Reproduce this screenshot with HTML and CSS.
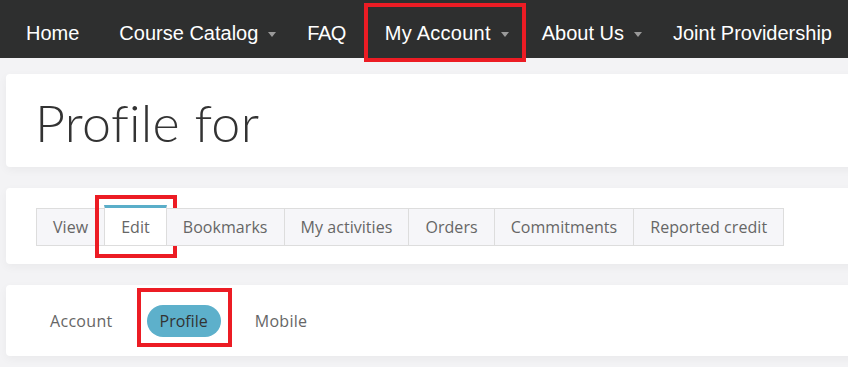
FILE: index.html
```html
<!DOCTYPE html>
<html lang="en">
<head>
<meta charset="utf-8">
<title>Profile</title>
<link rel="stylesheet" href="styles.css">
</head>
<body>
<nav class="topnav">
  <a class="nav-item">Home</a>
  <a class="nav-item dropdown">Course Catalog<span class="caret"></span></a>
  <a class="nav-item faq">FAQ</a>
  <a class="nav-item dropdown marked">My Account<span class="caret"></span><span class="annot annot-nav"></span></a>
  <a class="nav-item dropdown">About Us<span class="caret"></span></a>
  <a class="nav-item">Joint Providership</a>
</nav>
<main class="content">
  <section class="card card-title">
    <h1 class="page-title">Profile for</h1>
  </section>
  <section class="card card-tabs">
    <ul class="tabs">
      <li class="tab">View</li>
      <li class="tab active">Edit<span class="annot annot-tab"></span></li>
      <li class="tab">Bookmarks</li>
      <li class="tab">My activities</li>
      <li class="tab">Orders</li>
      <li class="tab">Commitments</li>
      <li class="tab">Reported credit</li>
    </ul>
  </section>
  <section class="card card-pills">
    <ul class="pills">
      <li class="pill">Account</li>
      <li class="pill active">Profile<span class="annot annot-pill"></span></li>
      <li class="pill">Mobile</li>
    </ul>
  </section>
</main>
</body>
</html>
```
FILE: styles.css
```css
html, body {
  margin: 0;
  padding: 0;
  overflow: hidden;
}
body {
  background: #f3f3f5;
  font-family: "Open Sans", "Liberation Sans", sans-serif;
}
.topnav {
  display: flex;
  height: 58px;
  background: #2e2f2f;
  padding-left: 6px;
}
.nav-item {
  position: relative;
  display: flex;
  align-items: flex-start;
  box-sizing: border-box;
  height: 58px;
  padding: 22px 20px 0;
  line-height: 23px;
  font-family: "Liberation Sans", Arial, sans-serif;
  font-size: 20px;
  color: #ffffff;
  white-space: nowrap;
}
.nav-item.faq {
  letter-spacing: -0.5px;
  padding-right: 19px;
}
.nav-item.dropdown {
  padding-right: 11px;
}
.nav-item.marked {
  letter-spacing: 0.25px;
  padding-right: 13px;
}
.caret {
  display: inline-block;
  width: 0;
  height: 0;
  margin: 10px 0 0 10px;
  border-left: 4px solid transparent;
  border-right: 4px solid transparent;
  border-top: 5px solid #9a9a9a;
}
.annot {
  position: absolute;
  border: 4px solid #ec1c24;
  pointer-events: none;
}
.annot-nav {
  left: -1px;
  right: -4px;
  top: 3px;
  bottom: -4px;
}
.content {
  padding: 16px 0 0 6px;
}
.card {
  width: 1000px;
  background: #ffffff;
  border-radius: 4px;
  box-shadow: 0 3px 10px rgba(0, 0, 0, 0.045);
  margin-bottom: 21px;
  box-sizing: border-box;
}
.card-title {
  height: 93px;
  padding: 22px 29px 0;
}
.page-title {
  margin: 0;
  font-family: Lato, "Open Sans", sans-serif;
  font-weight: 300;
  font-size: 52px;
  line-height: 52px;
  letter-spacing: 0.3px;
  color: #333333;
}
.card-tabs {
  height: 76px;
  padding: 17px 30px 0;
}
.tabs {
  display: flex;
  align-items: flex-end;
  list-style: none;
  margin: 0;
  padding: 0;
}
.tab {
  position: relative;
  border: 1px solid #dddddd;
  margin-left: -1px;
  padding: 0 16px;
  line-height: 36px;
  font-size: 16px;
  letter-spacing: 0.05px;
  color: #666666;
  background: #f6f6f9;
  white-space: nowrap;
}
.tab:first-child {
  margin-left: 0;
}
.tab.active {
  background: #ffffff;
  border-top: 3px solid #5aaec9;
  padding-top: 1px;
}
.annot-tab {
  left: -10px;
  right: -11px;
  top: -13px;
  bottom: -13px;
}
.card-pills {
  height: 71px;
  padding: 20px 30px 0;
}
.pills {
  display: flex;
  gap: 20px;
  list-style: none;
  margin: 0;
  padding: 0;
}
.pill {
  position: relative;
  height: 32px;
  line-height: 32px;
  padding: 0 14px;
  border-radius: 16px;
  font-size: 16px;
  letter-spacing: 0.3px;
  color: #666666;
  white-space: nowrap;
}
.pill.active {
  background: #5db0cb;
  color: #333333;
  padding: 0 13px;
  letter-spacing: 0;
}
.annot-pill {
  left: -10px;
  right: -11px;
  top: -17px;
  bottom: -10px;
}
```
